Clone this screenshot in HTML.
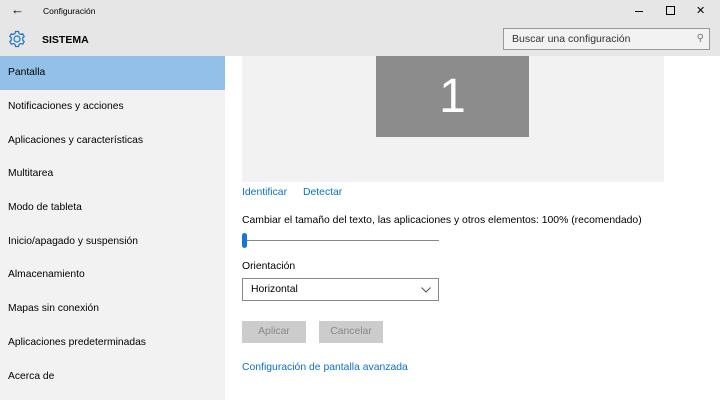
<html><head><style>
body{margin:0;width:720px;height:400px;overflow:hidden;background:#fff;font-family:"Liberation Sans",sans-serif;position:relative}
.a{position:absolute}
.side div{position:absolute;left:0;width:225px;height:34px;line-height:34px;padding-left:8px;box-sizing:border-box;font-size:10.3px;color:#000}
</style></head><body>
<div class="a" style="left:0;top:0;width:720px;height:56px;background:#e6e6e6"></div>
<div class="a" style="left:11px;top:2px;font-size:13px">&#8592;</div>
<div class="a" style="left:43px;top:6px;font-size:8.5px">Configuración</div>
<div class="a" style="left:635px;top:11px;width:8px;height:1px;background:#000"></div>
<div class="a" style="left:666px;top:6px;width:7px;height:7px;border:1px solid #000"></div>
<div class="a" style="left:696px;top:4px;font-size:11px">&#10005;</div>
<svg class="a" style="left:8px;top:30px" width="18" height="18" viewBox="0 0 18 18"><g fill="none" stroke="#1a73c8" stroke-width="1.2"><circle cx="9" cy="9" r="3"/><path d="M7.5 1.5h3l.5 2 1.7 1 2-.7 1.5 2.6-1.5 1.4v2.4l1.5 1.4-1.5 2.6-2-.7-1.7 1-.5 2h-3l-.5-2-1.7-1-2 .7-1.5-2.6 1.5-1.4V7.8L1.8 6.4l1.5-2.6 2 .7 1.7-1z"/></g></svg>
<div class="a" style="left:42px;top:34px;font-size:10.5px;font-weight:bold">SISTEMA</div>
<div class="a" style="left:503px;top:28px;width:207px;height:22px;border:1px solid #999;box-sizing:border-box;background:#f2f2f2;font-size:10.5px;line-height:20px;padding-left:8px;color:#333">Buscar una configuración<span style="position:absolute;right:5px;color:#777;font-size:10px">&#9906;</span></div>
<div class="a side" style="left:0;top:56px;width:225px;height:344px;background:#f2f2f2">
<div style="top:0;background:#93c0e8">Pantalla</div>
<div style="top:34px">Notificaciones y acciones</div>
<div style="top:68px">Aplicaciones y características</div>
<div style="top:101px">Multitarea</div>
<div style="top:135px">Modo de tableta</div>
<div style="top:169px">Inicio/apagado y suspensión</div>
<div style="top:202px">Almacenamiento</div>
<div style="top:236px">Mapas sin conexión</div>
<div style="top:270px">Aplicaciones predeterminadas</div>
<div style="top:304px">Acerca de</div>
</div>
<div class="a" style="left:242px;top:56px;width:422px;height:126px;background:#f2f2f2"></div>
<div class="a" style="left:376px;top:56px;width:153px;height:81px;background:#8c8c8c;color:#fff;font-size:48px;line-height:81px;text-align:center;font-weight:300">1</div>
<div class="a" style="left:242px;top:187px;font-size:10.4px;color:#0a70d0">Identificar</div>
<div class="a" style="left:303px;top:187px;font-size:10.4px;color:#0a70d0">Detectar</div>
<div class="a" style="left:242px;top:215px;font-size:10.4px">Cambiar el tamaño del texto, las aplicaciones y otros elementos: 100% (recomendado)</div>
<div class="a" style="left:242px;top:240px;width:197px;height:1px;background:#888"></div>
<div class="a" style="left:242px;top:233px;width:5px;height:15px;border-radius:3px;background:#1a73d8"></div>
<div class="a" style="left:242px;top:261px;font-size:10.4px">Orientación</div>
<div class="a" style="left:242px;top:278px;width:197px;height:23px;border:1px solid #888;box-sizing:border-box;font-size:10.4px;line-height:21px;padding-left:8px">Horizontal
<svg style="position:absolute;right:7px;top:8px" width="10" height="6"><path d="M0.5 0.5L5 5 9.5 0.5" fill="none" stroke="#555"/></svg></div>
<div class="a" style="left:242px;top:321px;width:64px;height:22px;background:#ccc;color:#888;font-size:10.4px;line-height:22px;text-align:center">Aplicar</div>
<div class="a" style="left:319px;top:321px;width:64px;height:22px;background:#ccc;color:#888;font-size:10.4px;line-height:22px;text-align:center">Cancelar</div>
<div class="a" style="left:242px;top:362px;font-size:10.4px;color:#0a70d0">Configuración de pantalla avanzada</div>
</body></html>
